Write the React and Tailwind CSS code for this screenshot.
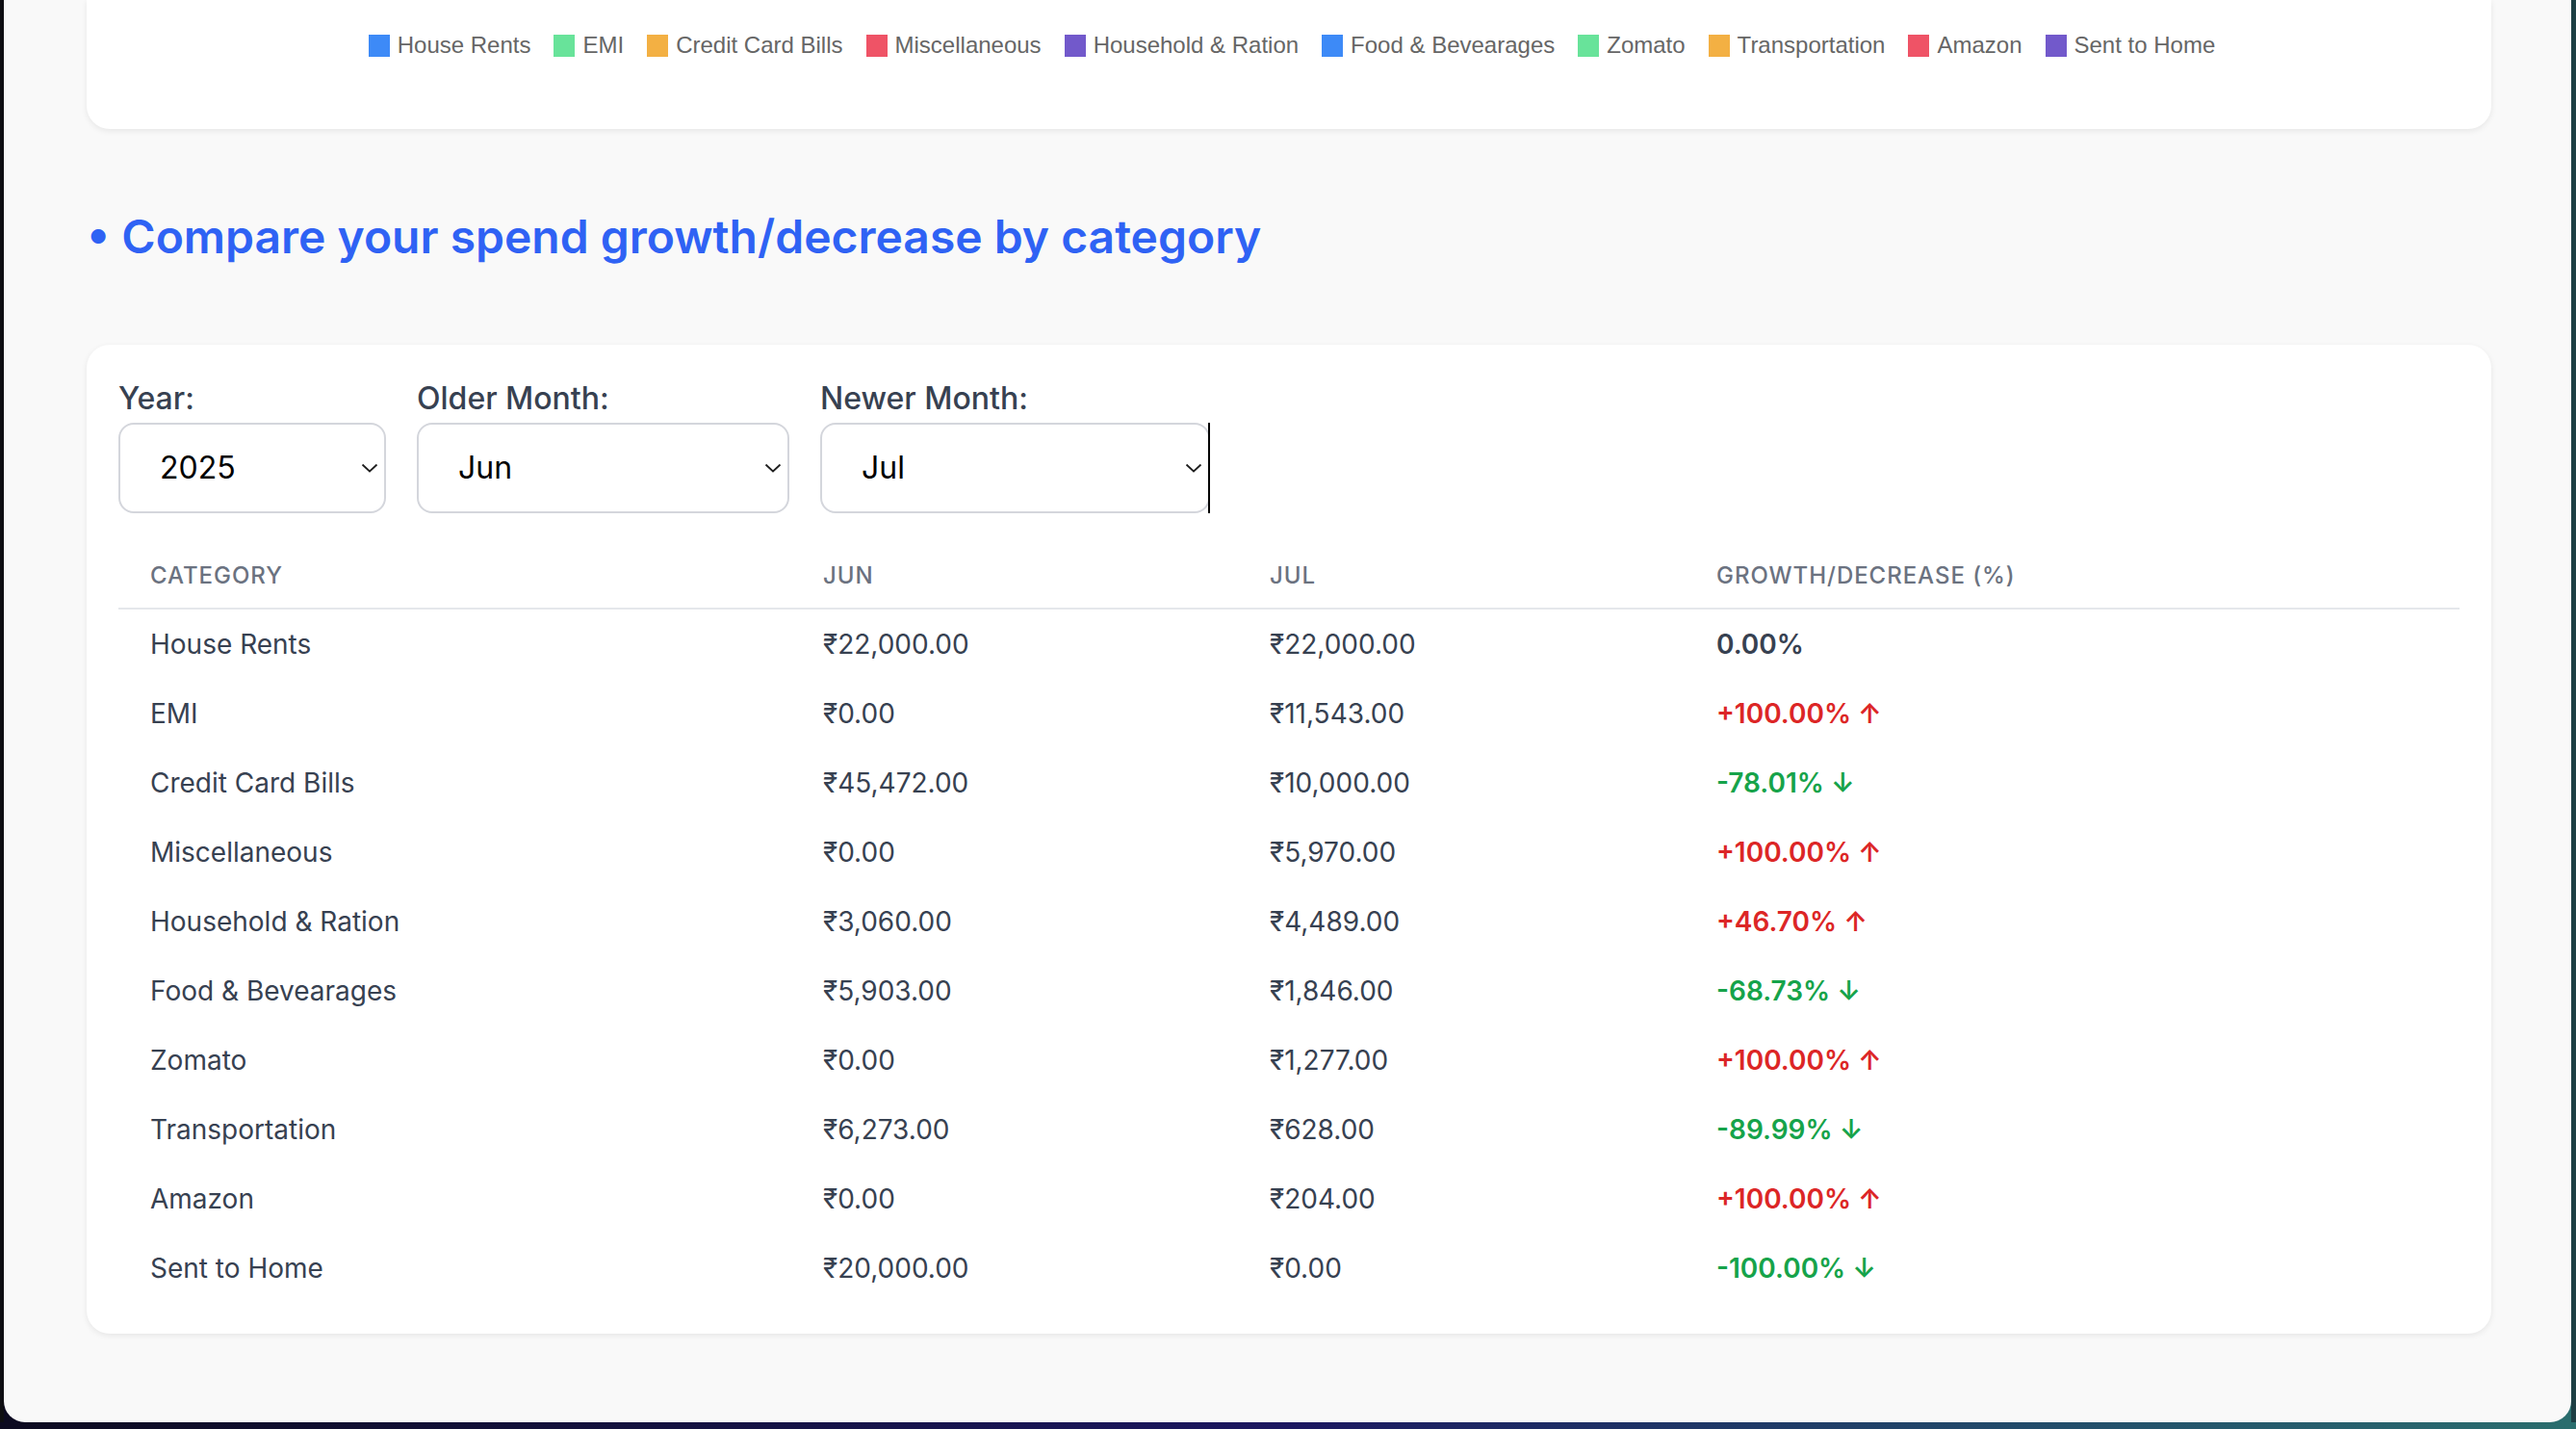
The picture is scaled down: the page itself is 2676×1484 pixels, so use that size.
import React from 'react'

const LEGEND = [
  { label: 'House Rents', color: '#3d8af7' },
  { label: 'EMI', color: '#68e39a' },
  { label: 'Credit Card Bills', color: '#f3b043' },
  { label: 'Miscellaneous', color: '#ef5366' },
  { label: 'Household & Ration', color: '#7259cb' },
  { label: 'Food & Bevearages', color: '#3d8af7' },
  { label: 'Zomato', color: '#68e39a' },
  { label: 'Transportation', color: '#f3b043' },
  { label: 'Amazon', color: '#ef5366' },
  { label: 'Sent to Home', color: '#7259cb' },
]

const ROWS = [
  ['House Rents', '₹22,000.00', '₹22,000.00', '0.00%', 0],
  ['EMI', '₹0.00', '₹11,543.00', '+100.00%', 1],
  ['Credit Card Bills', '₹45,472.00', '₹10,000.00', '-78.01%', -1],
  ['Miscellaneous', '₹0.00', '₹5,970.00', '+100.00%', 1],
  ['Household & Ration', '₹3,060.00', '₹4,489.00', '+46.70%', 1],
  ['Food & Bevearages', '₹5,903.00', '₹1,846.00', '-68.73%', -1],
  ['Zomato', '₹0.00', '₹1,277.00', '+100.00%', 1],
  ['Transportation', '₹6,273.00', '₹628.00', '-89.99%', -1],
  ['Amazon', '₹0.00', '₹204.00', '+100.00%', 1],
  ['Sent to Home', '₹20,000.00', '₹0.00', '-100.00%', -1],
]

function Chevron() {
  return (
    <svg width="18" height="10" viewBox="0 0 18 10" className="pointer-events-none absolute right-[8px] top-1/2 -translate-y-1/2">
      <path d="M1.5 1.5 L9 8.5 L16.5 1.5" fill="none" stroke="#1f1f1f" strokeWidth="1.8" />
    </svg>
  )
}

function Picker({ label, value, width, options, cursor }) {
  return (
    <div className="flex flex-col" style={{ width }}>
      <label className="mb-[1px] text-[32px] font-medium leading-[48px] text-[#374151]">{label}</label>
      <div className="relative">
        <select defaultValue={value}
          className="h-[94px] w-full appearance-none rounded-[16px] border-2 border-[#d4d6dc] bg-white pl-[41px] text-[32px] text-black outline-none">
          {options.map(o => <option key={o}>{o}</option>)}
        </select>
        <Chevron />
        {cursor && <div className="absolute right-0 top-0 h-full w-[2px] bg-black" />}
      </div>
    </div>
  )
}

export default function App() {
  const months = ['Jan', 'Feb', 'Mar', 'Apr', 'May', 'Jun', 'Jul', 'Aug', 'Sep', 'Oct', 'Nov', 'Dec']

  return (
    <div className="h-[1484px] w-[2676px] overflow-hidden bg-gradient-to-r from-[#0c0a20] via-[#1b1660] to-[#2a6e6e] font-['Inter',sans-serif]">
      <div className="flex h-[1477px] w-[2676px]">
        <div className="w-[4px] bg-[#0e0e12]" />
        <div className="h-full w-[2667px] overflow-hidden rounded-b-[22px] bg-[#f9f9f9] pl-[86px]">
          {/* chart card, cut off at the top */}
          <div className="h-[134px] w-[2498px] rounded-b-[24px] bg-white pl-[6px] pt-[35px] shadow-[0_2px_6px_rgba(0,0,0,0.08)]">
            <div className="flex items-center justify-center gap-[24px] font-['Liberation_Sans',Arial,sans-serif] text-[24px] leading-[24px] text-[#666]">
              {LEGEND.map(l => (
                <div key={l.label} className="flex items-center gap-[8px]">
                  <span className="h-[23px] w-[22px]" style={{ backgroundColor: l.color }} />
                  <span>{l.label}</span>
                </div>
              ))}
            </div>
          </div>

          <h2 className="mt-[80px] text-[48px] font-semibold leading-[64px] text-[#2f62f4]">
            • Compare your spend growth/decrease by category
          </h2>

          <div className="mt-[80px] w-[2498px] rounded-[24px] bg-white px-[33px] pb-[32px] pt-[32px] shadow-[0_2px_6px_rgba(0,0,0,0.08)]">
            <div className="flex gap-[32px]">
              <Picker label="Year:" value="2025" width={278} options={['2024', '2025']} />
              <Picker label="Older Month:" value="Jun" width={387} options={months} />
              <Picker label="Newer Month:" value="Jul" width={405} options={months} cursor />
            </div>

            <table className="mt-[31px] w-full table-fixed border-collapse">
              <colgroup>
                <col className="w-[699px]" />
                <col className="w-[464px]" />
                <col className="w-[464px]" />
                <col />
              </colgroup>
              <thead>
                <tr className="border-b-2 border-[#e5e7eb] text-left text-[24px] leading-[32px] uppercase tracking-[0.04em] text-[#6b7280]">
                  <th className="px-[33px] pb-[17px] pt-[18px] font-medium">Category</th>
                  <th className="px-[33px] pb-[17px] pt-[18px] font-medium">Jun</th>
                  <th className="px-[33px] pb-[17px] pt-[18px] font-medium">Jul</th>
                  <th className="px-[33px] pb-[17px] pt-[18px] font-medium">Growth/Decrease (%)</th>
                </tr>
              </thead>
              <tbody className="text-[28px] leading-[40px] text-[#374151]">
                {ROWS.map(([name, a, b, pct, dir]) => (
                  <tr key={name}>
                    <td className="px-[33px] py-[16px]">{name}</td>
                    <td className="px-[33px] py-[16px]">{a}</td>
                    <td className="px-[33px] py-[16px]">{b}</td>
                    <td className={`px-[33px] py-[16px] font-semibold ${dir > 0 ? 'text-[#dc2626]' : dir < 0 ? 'text-[#16a34a]' : 'text-[#374151]'}`}>
                      {pct}{dir > 0 ? ' ↑' : dir < 0 ? ' ↓' : ''}
                    </td>
                  </tr>
                ))}
              </tbody>
            </table>
          </div>
        </div>
        <div className="flex-1 bg-[#1d3f44]" />
      </div>
    </div>
  )
}
